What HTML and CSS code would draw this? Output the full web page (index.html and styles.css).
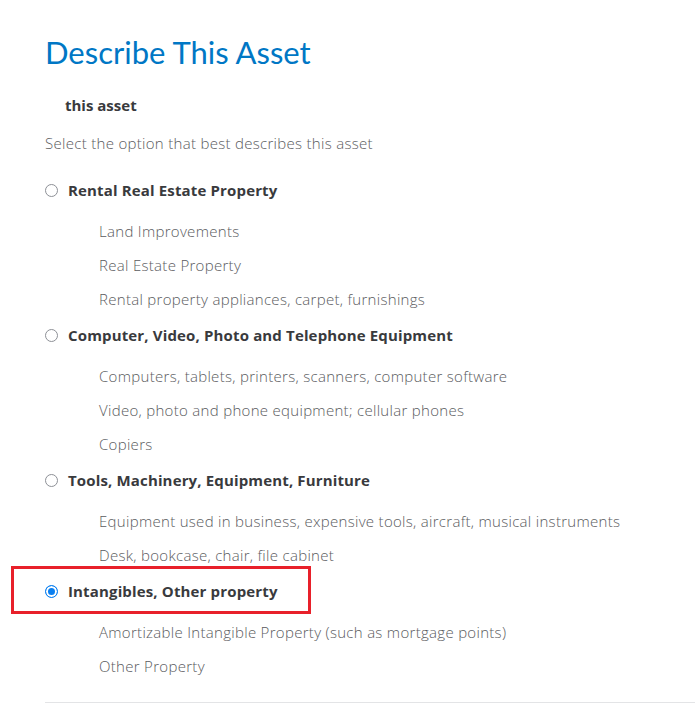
FILE: index.html
```html
<!DOCTYPE html>
<html>
<head>
<meta charset="utf-8">
<link rel="stylesheet" href="styles.css">
</head>
<body>
<div class="page">
  <h1 class="title">Describe This Asset</h1>
  <div class="subject">this asset</div>
  <p class="prompt">Select the option that best describes this asset</p>

  <div class="group first">
    <label class="option"><span class="radio"></span><span class="label">Rental Real Estate Property</span></label>
    <ul class="items">
      <li>Land Improvements</li>
      <li>Real Estate Property</li>
      <li>Rental property appliances, carpet, furnishings</li>
    </ul>
  </div>

  <div class="group">
    <label class="option"><span class="radio"></span><span class="label">Computer, Video, Photo and Telephone Equipment</span></label>
    <ul class="items">
      <li>Computers, tablets, printers, scanners, computer software</li>
      <li>Video, photo and phone equipment; cellular phones</li>
      <li>Copiers</li>
    </ul>
  </div>

  <div class="group">
    <label class="option"><span class="radio"></span><span class="label">Tools, Machinery, Equipment, Furniture</span></label>
    <ul class="items">
      <li>Equipment used in business, expensive tools, aircraft, musical instruments</li>
      <li>Desk, bookcase, chair, file cabinet</li>
    </ul>
  </div>

  <div class="group">
    <label class="option selected"><span class="radio checked"></span><span class="label">Intangibles, Other property</span><span class="highlight"></span></label>
    <ul class="items">
      <li>Amortizable Intangible Property (such as mortgage points)</li>
      <li>Other Property</li>
    </ul>
  </div>

  <div class="divider"></div>
</div>
</body>
</html>
```

FILE: styles.css
```css
html, body {
  margin: 0;
  padding: 0;
  background: #fff;
}
body {
  font-family: "Open Sans", Lato, sans-serif;
  color: #393a3d;
}
.page {
  padding: 34px 0 0 45px;
}
.title {
  margin: 0;
  font-family: Lato, "Open Sans", sans-serif;
  font-size: 31px;
  font-weight: 400;
  color: #0077c5;
  line-height: 36px;
}
.subject {
  margin: 25px 0 0 20px;
  font-size: 15px;
  font-weight: 700;
  color: #393a3d;
  line-height: 20px;
}
.prompt {
  margin: 18px 0 0 0;
  font-size: 15px;
  font-weight: 300;
  color: #5a5b5e;
  line-height: 20px;
  letter-spacing: 0.3px;
}
.group {
  margin-top: 16px;
}
.group.first {
  margin-top: 27px;
}
.option {
  position: relative;
  display: flex;
  align-items: center;
  gap: 10px;
  height: 20px;
}
.radio {
  width: 11px;
  height: 11px;
  border: 1px solid #8d9096;
  border-radius: 50%;
  box-sizing: content-box;
  flex: none;
}
.radio.checked {
  border-color: #0a7ff0;
  background: #0a7ff0;
  box-shadow: inset 0 0 0 2px #fff;
}
.label {
  font-size: 15px;
  font-weight: 700;
  color: #393a3d;
  letter-spacing: 0.15px;
}
.highlight {
  position: absolute;
  left: -34px;
  top: -15px;
  width: 294px;
  height: 42px;
  border: 3px solid #e8202a;
}
.items {
  list-style: none;
  margin: 0;
  padding: 11px 0 0 54px;
}
.items li {
  font-size: 15px;
  font-weight: 300;
  color: #5a5b5e;
  line-height: 20px;
  letter-spacing: 0.3px;
  margin-top: 14px;
}
.items li:first-child {
  margin-top: 10px;
}
.divider {
  margin-top: 26px;
  height: 1px;
  background: #e3e4e6;
}
```
